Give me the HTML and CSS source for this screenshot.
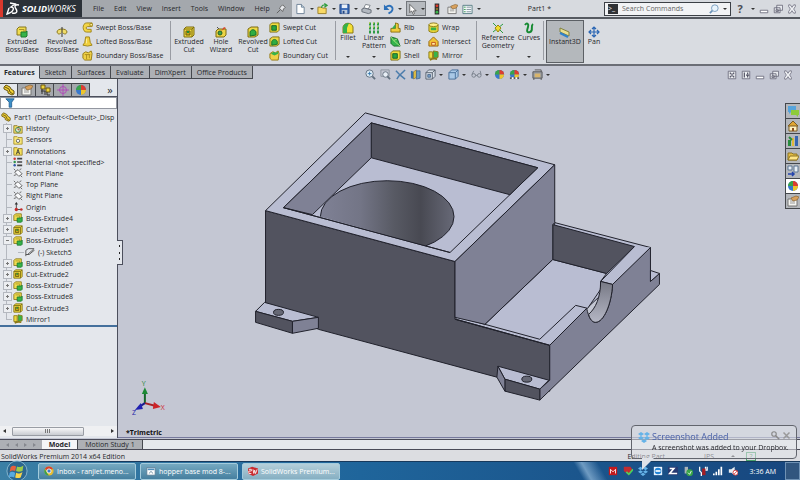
FILE: index.html
```html
<!DOCTYPE html>
<html lang="en">
<head>
    <meta charset="UTF-8">
    <meta name="viewport" content="width=device-width, initial-scale=1.0">
    <title>SolidWorks - Part1</title>
    <link rel="stylesheet" href="styles.css">
</head>
<body>
    <svg class="defs" aria-hidden="true">
        <defs>
            <linearGradient id="bore">
                <stop offset="0" stop-color="#7f8195"/><stop offset=".3" stop-color="#737586"/>
                <stop offset=".55" stop-color="#585a64"/><stop offset=".75" stop-color="#484952"/><stop offset="1" stop-color="#676977"/>
            </linearGradient>
            <linearGradient id="notch" x1="0" y1="0" x2="0" y2="1">
                <stop offset="0" stop-color="#777985"/><stop offset="1" stop-color="#b4b6c4"/>
            </linearGradient>
            <clipPath id="floorClip"><path d="M371 158L510 195L450 253L312 215Z"/></clipPath>
        </defs>
        <symbol id="boss" viewBox="0 0 12 12"><path d="M1 3l2-2h7v6l-2 2H1z" fill="#f0dc50" stroke="#86761c"/><path d="M3 3.500h5v5" fill="none" stroke="#a8932a"/><path d="M5 6h5l1-1v5l-1 1H5z" fill="#36b34a" stroke="#1d7a2c"/></symbol>
        <symbol id="cut" viewBox="0 0 12 12"><path d="M1 3l2-2h8v8l-2 2H1z" fill="#efd93f" stroke="#7d6c12"/><path d="M1 3h8v8M9 3l2-2" fill="none" stroke="#7d6c12"/><path d="M3 5h4v4H3z" fill="#c9a71a" stroke="#6e5e10"/><path d="M5 5v2" stroke="#228b35" stroke-width="2"/></symbol>
        <symbol id="revolve" viewBox="0 0 12 12"><path d="M1 6c0-4 10-4 10 0-1 3-3 2-4 1M1 6c1 3 3 2 4 1" fill="#f1dd69" stroke="#8b7820"/><path d="M6 1v10" stroke="#333"/></symbol>
        <symbol id="swept" viewBox="0 0 12 12"><path d="M11 1H5C0 1 0 11 5 11h5V8H6C4 8 4 5 6 5h5z" fill="#f3d547" stroke="#9c8215"/><circle cx="10" cy="3" r="1.500" fill="#fff2a0" stroke="#9c8215"/></symbol>
        <symbol id="loft" viewBox="0 0 12 12"><path d="M4 1h4l1 6 2 3-5 1-5-1 2-3z" fill="#f0cf3d" stroke="#9c8215"/><path d="M5 3v5" stroke="#fff3a5"/></symbol>
        <symbol id="boundary" viewBox="0 0 12 12"><path d="M1 4l3-2 3 1 3-2 1 3-1 7H3L1 9z" fill="#f0d047" stroke="#95790f"/><path d="M3 5h6M5 5v5M8 5v4" stroke="#a88a1e"/></symbol>
        <symbol id="boundaryCut" viewBox="0 0 12 12"><path d="M1 4l3-2 3 1 3-2 1 3-1 7H3L1 9z" fill="#f0d047" stroke="#95790f"/><path d="M2 4l3-2 2 1 3-1v2L6 6z" fill="#36b34a"/></symbol>
        <symbol id="hole" viewBox="0 0 12 12"><path d="M1 5l2-2h8v6l-2 2H1z" fill="#ecd445" stroke="#7f6d12"/><circle cx="5" cy="7" r="2" fill="#3ca54a" stroke="#245f2b"/><path d="M6 5l3-4 2 1z" fill="#d6452c"/><path d="M2 1l2 2" stroke="#555"/></symbol>
        <symbol id="greenCut" viewBox="0 0 12 12"><path d="M1 3l3-2h7v8l-3 2H1z" fill="#eed945" stroke="#7f6d12"/><path d="M3 10V6c1-3 5-3 6 0v3z" fill="#2fae43" stroke="#19702a"/></symbol>
        <symbol id="fillet" viewBox="0 0 12 12"><path d="M1 5c1-5 9-5 10 0v6H1z" fill="#f4df35" stroke="#8a7914"/><path d="M1 6c0-4 4-5 6-5L5 6v5H1z" fill="#35b14a"/></symbol>
        <symbol id="pattern" viewBox="0 0 12 12"><path d="M1 2h2M5 2h2M9 2h2M1 6h2M5 6h2M9 6h2M1 10h2M5 10h2M9 10h2" stroke="#2f9c46" stroke-width="3"/><path d="M1 1h1M5 1h1M9 1h1M1 5h1M5 5h1M9 5h1" stroke="#e9dc48"/></symbol>
        <symbol id="rib" viewBox="0 0 12 12"><path d="M1 7h5V1l3 1v5h2v4H1z" fill="#f0cc3c" stroke="#8a6e0c"/><path d="M2 7l4-5v5z" fill="#37b04c"/></symbol>
        <symbol id="draft" viewBox="0 0 12 12"><path d="M1 1l7 2 3 8H4L1 8z" fill="#35b44c" stroke="#176a27"/><path d="M1 1l3 4 7 6M4 5l4-2" stroke="#a6e27d" fill="none"/></symbol>
        <symbol id="shell" viewBox="0 0 12 12"><path d="M1 3l2-2h8v8l-2 2H1z" fill="#f1de40" stroke="#7f6d12"/><path d="M3 4h5v5H3z" fill="#29a740" stroke="#186026"/></symbol>
        <symbol id="wrap" viewBox="0 0 12 12"><path d="M1 3v7c2 2 8 2 10 0V3z" fill="#f1d837" stroke="#8a7914"/><ellipse cx="6" cy="3" rx="5" ry="2" fill="#fff08a" stroke="#8a7914"/><path d="M3 6h6v3H3z" fill="#35b14a"/></symbol>
        <symbol id="intersect" viewBox="0 0 12 12"><path d="M1 11V6l5-5 5 5v5z" fill="#f2c437" stroke="#94640c"/><path d="M4 10V7h4v3z" fill="#fff2a3" stroke="#be4f1e"/></symbol>
        <symbol id="mirror" viewBox="0 0 12 12"><path d="M1 2h4v7H1z" fill="#f0d93e" stroke="#8a7914"/><path d="M6 1l5 1v6l-5 1z" fill="#36b34a" stroke="#8a7914"/><path d="M2 11c3-2 5-2 8-1" fill="none" stroke="#8a7914" stroke-width="2"/></symbol>
        <symbol id="refgeo" viewBox="0 0 12 12"><path d="M1 1l10 10M1 10l10-8" stroke="#2b9c40"/><path d="M3 6l3-3 3 3-3 4z" fill="#f1dc2d" stroke="#99870f"/></symbol>
        <symbol id="curves" viewBox="0 0 12 12"><path d="M2 3c2-3 4-1 3 2s-2 6 2 5 0-6 3-8" fill="none" stroke="#168a32" stroke-width="2"/></symbol>
        <symbol id="instant" viewBox="0 0 12 12"><path d="M1 2l9 4v4L1 6z" fill="#e9df90" stroke="#7f8141"/><path d="M1 7l8 4" stroke="#2f82ca" stroke-width="2"/></symbol>
        <symbol id="pan" viewBox="0 0 12 12"><path d="M6 1v10M1 6h10M4 3l2-2 2 2M4 9l2 2 2-2M3 4L1 6l2 2M9 4l2 2-2 2" fill="none" stroke="#2a66b4" stroke-width="1.200"/></symbol>
        <symbol id="page" viewBox="0 0 12 12"><path d="M2 1h5l3 3v7H2z" fill="#fff" stroke="#6b8095"/><path d="M7 1v3h3" fill="#cbd9e6" stroke="#6b8095"/></symbol>
        <symbol id="folder" viewBox="0 0 12 12"><path d="M1 10V3h4l1 1h4v6z" fill="#e3bd43" stroke="#8e7424"/><path d="M1 10l2-4h9l-2 4z" fill="#ffe688" stroke="#8e7424"/></symbol>
        <symbol id="open" viewBox="0 0 12 12"><path d="M1 11V4h4l1 1h4v6z" fill="#f8d965" stroke="#9a7f26"/><path d="M5 5c0-3 2-4 5-3M8 0l3 2-3 2" fill="none" stroke="#2d9c3c" stroke-width="1.300"/></symbol>
        <symbol id="save" viewBox="0 0 12 12"><path d="M1 1h10v10H1z" fill="#3768b5" stroke="#244682"/><path d="M3 1h6v4H3z" fill="#e8eff8"/><path d="M3 7h6v4H3z" fill="#bac8da"/><path d="M4 8h2v3H4z" fill="#244682"/></symbol>
        <symbol id="print" viewBox="0 0 12 12"><path d="M3 5l2-4 5 1-2 4z" fill="#fff" stroke="#7a8088"/><path d="M1 6l3-1 7 2v3l-3 1-7-2z" fill="#b3b9c1" stroke="#656c76"/></symbol>
        <symbol id="undo" viewBox="0 0 12 12"><path d="M3 4c5-4 10 1 6 5l-3 2" fill="none" stroke="#2c70b9" stroke-width="2"/><path d="M1 1v6h6z" fill="#2c70b9"/></symbol>
        <symbol id="cursor" viewBox="0 0 12 12"><path d="M3 1v9l2-2 2 4 1-1-1-3h3z" fill="#fff" stroke="#444" stroke-width=".8"/></symbol>
        <symbol id="light" viewBox="0 0 12 12"><path d="M4 0h5v12H4z" fill="#333"/><circle cx="6.500" cy="2.500" r="1.500" fill="#e03a2b"/><circle cx="6.500" cy="6" r="1.300" fill="#8a7430"/><circle cx="6.500" cy="9.500" r="1.500" fill="#38b44a"/></symbol>
        <symbol id="props" viewBox="0 0 12 12"><path d="M1 4h9v7H1z" fill="#f4f4f0" stroke="#777"/><path d="M3 6h5M3 8h5" stroke="#999"/><path d="M4 3l5-2 3 1-2 3-4 1z" fill="#d9a15d" stroke="#8a6534" stroke-width=".7"/></symbol>
        <symbol id="list" viewBox="0 0 12 12"><path d="M1 2h10v9H1z" fill="#f5fafb" stroke="#547b83"/><path d="M5 4h5M5 6.500h5M5 9h5" stroke="#7c8c98"/><path d="M2 4h2M2 6.500h2M2 9h2" stroke="#30974a"/></symbol>
        <symbol id="pin" viewBox="0 0 12 12"><path d="M1 11l4-4M4 5l4 4 1-3 2-2-3-3-2 2z" fill="#e5e7ea" stroke="#555"/></symbol>
        <symbol id="part" viewBox="0 0 12 12"><path d="M1 3l2-2 4 2 1 2 3 2v3l-2 1-4-2V7L1 5z" fill="#f2d236" stroke="#6a5711"/><path d="M2 3l4 2 1 3 3 2" fill="none" stroke="#6a5711"/></symbol>
        <symbol id="config" viewBox="0 0 12 12"><path d="M2 1h4v4H2zM7 4h4v4H7z" fill="#efd43d" stroke="#6a5711"/><path d="M2 7h4v4M3 5v5M8 8v3h3" fill="none" stroke="#333"/></symbol>
        <symbol id="target" viewBox="0 0 12 12"><circle cx="6" cy="6" r="3.500" fill="none" stroke="#b04cba"/><path d="M6 0v12M0 6h12" stroke="#b04cba"/></symbol>
        <symbol id="ball" viewBox="0 0 12 12"><circle cx="6" cy="6" r="5" fill="#3878cd"/><path d="M6 6V1a5 5 0 0 0-5 5z" fill="#3aa348"/><path d="M6 6V1a5 5 0 0 1 5 5z" fill="#de3c2f"/><path d="M6 6h5a5 5 0 0 1-5 5z" fill="#efc52c"/></symbol>
        <symbol id="filter" viewBox="0 0 12 12"><path d="M1 1h10L8 5v6H5V5z" fill="#3c8fc7" stroke="#205e91"/></symbol>
        <symbol id="history" viewBox="0 0 12 12"><path d="M1 2h4l1 1h5v8H1z" fill="#f3df65" stroke="#89772a"/><circle cx="6" cy="7" r="3" fill="#d9f0d5" stroke="#31714b"/><path d="M6 5v2h2" fill="none" stroke="#a03020"/></symbol>
        <symbol id="sensor" viewBox="0 0 12 12"><path d="M1 2h4l1 1h5v8H1z" fill="#f8e77a" stroke="#a48d28"/><circle cx="6" cy="7" r="2" fill="#fff" stroke="#555"/></symbol>
        <symbol id="note" viewBox="0 0 12 12"><path d="M1 2h4l1 1h5v8H1z" fill="#f5e05c" stroke="#96802a"/><path d="M4 10l2-6 2 6M5 8h2" fill="none" stroke="#333"/></symbol>
        <symbol id="material" viewBox="0 0 12 12"><path d="M5 2h6M5 6h6M5 10h6" stroke="#444" stroke-width="2"/><circle cx="2" cy="2" r="1.500" fill="#cf3a33"/><circle cx="2" cy="6" r="1.500" fill="#31934b"/><circle cx="2" cy="10" r="1.500" fill="#3458a8"/></symbol>
        <symbol id="plane" viewBox="0 0 12 12"><path d="M2 5l4-3 5 5-4 3z" fill="#f8f9fb" stroke="#555"/><path d="M1 1l2 2M9 9l2 2M8 2l2-1M1 9l3-1" stroke="#555"/></symbol>
        <symbol id="origin" viewBox="0 0 12 12"><path d="M4 1v8h7" fill="none" stroke="#333"/><path d="M2 3l2-3 2 3z" fill="#333"/><circle cx="4" cy="9" r="2" fill="#c52b2b"/><circle cx="10" cy="9" r="1.500" fill="#c52b2b"/></symbol>
        <symbol id="sketch" viewBox="0 0 12 12"><path d="M1 11V4l3-2h7M3 9l7-6 1 1-6 5H1" fill="none" stroke="#444"/></symbol>
        <symbol id="zoomfit" viewBox="0 0 12 12"><circle cx="5" cy="5" r="4" fill="#dbeaf5" stroke="#62707e"/><path d="M8 8l3 3" stroke="#62707e" stroke-width="2"/><path d="M3 5h4M5 3v4" stroke="#3b78ac"/></symbol>
        <symbol id="zoomarea" viewBox="0 0 12 12"><path d="M1 1h9v7H1z" fill="none" stroke="#8a939d"/><circle cx="6" cy="6" r="3" fill="#e7eef5" stroke="#62707e"/><path d="M8 8l3 3" stroke="#62707e" stroke-width="2"/></symbol>
        <symbol id="prev" viewBox="0 0 12 12"><path d="M1 2l5 5M11 1L4 8l-2 3M6 7l5 4" stroke="#4b7cab" stroke-width="1.600" fill="none"/></symbol>
        <symbol id="section" viewBox="0 0 12 12"><path d="M1 2l3 1v8l-3-1z" fill="#3971ae"/><path d="M4 3l3-2v8l-3 2z" fill="#e6c445" stroke="#7a6625" stroke-width=".6"/><path d="M7 2h4v8l-4 1z" fill="#6999c4" stroke="#335983" stroke-width=".7"/></symbol>
        <symbol id="cube" viewBox="0 0 12 12"><path d="M1 4l3-3h7v7l-3 3H1z" fill="#a9c8e6" stroke="#476f99"/><path d="M1 4h7v7M8 4l3-3" fill="none" stroke="#476f99"/></symbol>
        <symbol id="views" viewBox="0 0 12 12"><path d="M1 4l3-3h7v7l-3 3H1z" fill="#d8dfe8" stroke="#555f6c"/><path d="M1 4h7v7M8 4l3-3" fill="none" stroke="#555f6c"/><path d="M3 6h3v3H3z" fill="#749bc6" stroke="#55718f"/></symbol>
        <symbol id="glasses" viewBox="0 0 12 12"><circle cx="3" cy="7" r="2" fill="none" stroke="#777f8a"/><circle cx="9" cy="7" r="2" fill="none" stroke="#777f8a"/><path d="M5 7h2M1 6l2-4M11 6l-1-4" fill="none" stroke="#777f8a"/></symbol>
        <symbol id="scene" viewBox="0 0 12 12"><use href="#ball"/><path d="M1 9h10v2H1z" fill="#555"/><path d="M3 9h2v2H3zM7 9h2v2H7z" fill="#fff"/></symbol>
        <symbol id="camera" viewBox="0 0 12 12"><path d="M1 3h10v7H1z" fill="#9a9ea4" stroke="#555"/><path d="M3 5h6v4H3z" fill="#d8b46b"/><path d="M3 1h7v2M2 10v2M10 10v2" stroke="#555" fill="none"/></symbol>
        <symbol id="min" viewBox="0 0 12 12"><path d="M1.500 7.500h9v3h-9z" fill="#fff" stroke="#667"/></symbol>
        <symbol id="restore" viewBox="0 0 12 12"><path d="M4.500 1.500h7v6h-7zM1.500 4.500h7v6h-7z" fill="#e8eaee" stroke="#667"/><path d="M3.500 7h3v2h-3z" fill="none" stroke="#667"/></symbol>
        <symbol id="close" viewBox="0 0 12 12"><path d="M2 1h2l2 3 2-3h2v2L8 6l2 3v2H8L6 8l-2 3H2V9l2-3-2-3z" fill="#eef0f3" stroke="#667" stroke-width=".9"/></symbol>
        <symbol id="paneL" viewBox="0 0 12 12"><path d="M1.500 1.500h9v9h-9z" fill="#eef0f3" stroke="#667"/><path d="M4 3v2M4 7v2M6 4v4M8 3v2M8 7v2" stroke="#556" stroke-width="1.500"/></symbol>
        <symbol id="paneR" viewBox="0 0 12 12"><path d="M1.500 1.500h9v9h-9z" fill="#eef0f3" stroke="#667"/><path d="M4 3v6M6 6h4M8 3v2M8 7v2" stroke="#556" stroke-width="1.500"/></symbol>
        <symbol id="mag" viewBox="0 0 12 12"><circle cx="7" cy="5" r="4" fill="#e9f4fc" stroke="#6b93b8"/><path d="M4 8l-3 3" stroke="#6b93b8" stroke-width="2"/></symbol>
        <symbol id="chat" viewBox="0 0 12 12"><path d="M1 1h8v6H4L2 9V7H1z" fill="#56a4dc"/><path d="M4 5h8v5h-1v2L9 10H4z" fill="#8ecb3b"/></symbol>
        <symbol id="home" viewBox="0 0 12 12"><path d="M2 6v5h8V6" fill="#fff1bf" stroke="#7c5c22"/><path d="M1 6l5-5 5 5z" fill="#e0a634" stroke="#7c5c22"/><path d="M5 8h2v3H5z" fill="#8b4f20"/></symbol>
        <symbol id="books" viewBox="0 0 12 12"><path d="M1 5h3v6H1z" fill="#288b3d"/><path d="M5 3h2v8H5z" fill="#e0b83a"/><path d="M8 1h3v10H8z" fill="#3665af"/><path d="M2 2l3 3" stroke="#288b3d" stroke-width="2"/></symbol>
        <symbol id="palette" viewBox="0 0 12 12"><path d="M1 1h4v4H1zM7 1h4v6H7z" fill="#e8eff6" stroke="#5d7695"/><path d="M1 9h6M5 7l2 2-2 2" fill="none" stroke="#2444ad" stroke-width="1.500"/></symbol>
        <symbol id="dropbox" viewBox="0 0 12 12"><path d="M3 1l3 2-3 2-3-2zM9 1l3 2-3 2-3-2zM3 5l3 2-3 2-3-2zM9 5l3 2-3 2-3-2zM6 8l3 2-3 2-3-2z" fill="#65b3e8"/></symbol>
        <symbol id="chrome" viewBox="0 0 12 12"><circle cx="6" cy="6" r="5.500" fill="#e6bd31"/><path d="M6 6L1 3.500A5.500 5.500 0 0 1 11 4H6z" fill="#d9422f"/><path d="M1 3.500L4 9l2 2.500A5.500 5.500 0 0 1 1 3.500z" fill="#38a14a"/><circle cx="6" cy="6" r="2.500" fill="#3d79cf" stroke="#fff"/></symbol>
        <symbol id="doc" viewBox="0 0 12 12"><path d="M1 2h10v9H1z" fill="#fff" stroke="#577b94"/><path d="M2 4h8" stroke="#4f8eba" stroke-width="2"/><path d="M4 9c1-3 3-3 4 0" stroke="#577b94" fill="none"/></symbol>
        <symbol id="sw" viewBox="0 0 12 12"><path d="M0 3l5-2 7 2v6l-6 3-6-3z" fill="#c92c30"/><path d="M1 4h3v2H1v3h3M6 4l1 5 1-4 1 4 2-5" fill="none" stroke="#fff"/></symbol>
    </svg>

    <header class="titlebar">
        <div class="brand">
            <svg class="ds" viewBox="0 0 14 14"><path d="M4 1l5 1-4 3c4 0 3 5-4 7l2-6M13 3c-4-1-5 1-3 4s0 5-4 4" fill="none" stroke="#fff" stroke-width="1.400"/></svg>
            <span><b>SOLID</b>WORKS</span>
        </div>
        <nav class="menus">
            <button>File</button><button>Edit</button><button>View</button><button>Insert</button><button>Tools</button><button>Window</button><button>Help</button>
            <button class="pin" aria-label="Pin"><svg class="i10"><use href="#pin"/></svg></button>
        </nav>
        <div class="quick">
            <button class="drop" aria-label="New"><svg><use href="#page"/></svg></button>
            <button class="drop" aria-label="Open"><svg><use href="#open"/></svg></button>
            <button class="drop" aria-label="Save"><svg><use href="#save"/></svg></button>
            <button class="drop" aria-label="Print"><svg><use href="#print"/></svg></button>
            <button class="drop" aria-label="Undo"><svg><use href="#undo"/></svg></button>
            <button class="drop picked" aria-label="Select"><svg><use href="#cursor"/></svg></button>
            <button aria-label="Rebuild"><svg><use href="#light"/></svg></button>
            <button aria-label="Properties"><svg><use href="#props"/></svg></button>
            <button class="drop" aria-label="Options"><svg><use href="#list"/></svg></button>
        </div>
        <span class="doc-title">Part1 *</span>
        <label class="search">
            <span class="prompt">&gt;_</span>
            <input type="text" placeholder="Search Commands" aria-label="Search Commands">
            <svg class="i10"><use href="#mag"/></svg><i class="caret"></i>
        </label>
        <div class="window-buttons">
            <button class="help" aria-label="Help">?</button><i class="caret"></i>
            <button aria-label="Minimize"><svg><use href="#min"/></svg></button>
            <button aria-label="Restore"><svg><use href="#restore"/></svg></button>
            <button aria-label="Close"><svg><use href="#close"/></svg></button>
        </div>
    </header>

    <section class="ribbon">
        <button class="big w40"><svg><use href="#boss"/></svg>Extruded<br>Boss/Base</button>
        <button class="big w40"><svg><use href="#revolve"/></svg>Revolved<br>Boss/Base</button>
        <div class="stack w86">
            <button><svg><use href="#swept"/></svg>Swept Boss/Base</button>
            <button><svg><use href="#loft"/></svg>Lofted Boss/Base</button>
            <button><svg><use href="#boundary"/></svg>Boundary Boss/Base</button>
        </div>
        <i class="rule"></i>
        <button class="big w32"><svg><use href="#cut"/></svg>Extruded<br>Cut</button>
        <button class="big w32"><svg><use href="#hole"/></svg>Hole<br>Wizard</button>
        <button class="big w32"><svg><use href="#greenCut"/></svg>Revolved<br>Cut</button>
        <div class="stack w64">
            <button><svg><use href="#shell"/></svg>Swept Cut</button>
            <button><svg><use href="#greenCut"/></svg>Lofted Cut</button>
            <button><svg><use href="#boundaryCut"/></svg>Boundary Cut</button>
        </div>
        <i class="rule"></i>
        <button class="big more w20"><svg><use href="#fillet"/></svg>Fillet</button>
        <button class="big more w32"><svg><use href="#pattern"/></svg>Linear<br>Pattern</button>
        <div class="stack w38">
            <button><svg><use href="#rib"/></svg>Rib</button>
            <button><svg><use href="#draft"/></svg>Draft</button>
            <button><svg><use href="#shell"/></svg>Shell</button>
        </div>
        <div class="stack w46">
            <button><svg><use href="#wrap"/></svg>Wrap</button>
            <button><svg><use href="#intersect"/></svg>Intersect</button>
            <button><svg><use href="#mirror"/></svg>Mirror</button>
        </div>
        <i class="rule"></i>
        <button class="big more w38"><svg><use href="#refgeo"/></svg>Reference<br>Geometry</button>
        <button class="big more w24"><svg><use href="#curves"/></svg>Curves</button>
        <i class="rule"></i>
        <button class="big on w38"><svg><use href="#instant"/></svg>Instant3D</button>
        <button class="big w20"><svg><use href="#pan"/></svg>Pan</button>
    </section>

    <div class="work">
        <nav class="tabs">
            <button class="active">Features</button><button>Sketch</button><button>Surfaces</button><button>Evaluate</button><button>DimXpert</button><button>Office Products</button>
        </nav>
        <div class="hud">
            <button aria-label="Zoom to fit"><svg><use href="#zoomfit"/></svg></button>
            <button aria-label="Zoom to area"><svg><use href="#zoomarea"/></svg></button>
            <button aria-label="Previous view"><svg><use href="#prev"/></svg></button>
            <button aria-label="Section view"><svg><use href="#section"/></svg></button>
            <button class="drop" aria-label="View orientation"><svg><use href="#views"/></svg></button>
            <button class="drop" aria-label="Display style"><svg><use href="#cube"/></svg></button>
            <button class="drop" aria-label="Hide items"><svg><use href="#glasses"/></svg></button>
            <button aria-label="Appearance"><svg><use href="#ball"/></svg></button>
            <button class="drop" aria-label="Scene"><svg><use href="#scene"/></svg></button>
            <button class="drop" aria-label="View settings"><svg><use href="#camera"/></svg></button>
        </div>
        <div class="view-buttons">
            <button aria-label="Left pane"><svg><use href="#paneL"/></svg></button>
            <button aria-label="Right pane"><svg><use href="#paneR"/></svg></button>
            <button aria-label="Minimize view"><svg><use href="#min"/></svg></button>
            <button aria-label="Restore view"><svg><use href="#restore"/></svg></button>
            <button aria-label="Close view"><svg><use href="#close"/></svg></button>
        </div>

        <div class="main">
            <aside class="side">
                <div class="side-tabs">
                    <button class="active" aria-label="Feature tree"><svg><use href="#part"/></svg></button>
                    <button aria-label="Property manager"><svg><use href="#props"/></svg></button>
                    <button aria-label="Configurations"><svg><use href="#config"/></svg></button>
                    <button aria-label="DimXpert manager"><svg><use href="#target"/></svg></button>
                    <button aria-label="Display manager"><svg><use href="#ball"/></svg></button>
                    <button class="expand" aria-label="More tabs">»</button>
                </div>
                <label class="filter"><svg class="i10"><use href="#filter"/></svg><input type="text" aria-label="Filter tree"></label>
                <div class="root"><svg class="i10"><use href="#part"/></svg>Part1&nbsp; (Default&lt;&lt;Default&gt;_Disp</div>
                <ul class="tree">
                    <li class="plus"><svg><use href="#history"/></svg>History</li>
                    <li><svg><use href="#sensor"/></svg>Sensors</li>
                    <li class="plus"><svg><use href="#note"/></svg>Annotations</li>
                    <li><svg><use href="#material"/></svg>Material &lt;not specified&gt;</li>
                    <li><svg><use href="#plane"/></svg>Front Plane</li>
                    <li><svg><use href="#plane"/></svg>Top Plane</li>
                    <li><svg><use href="#plane"/></svg>Right Plane</li>
                    <li><svg><use href="#origin"/></svg>Origin</li>
                    <li class="plus"><svg><use href="#boss"/></svg>Boss-Extrude4</li>
                    <li class="plus"><svg><use href="#cut"/></svg>Cut-Extrude1</li>
                    <li class="plus minus"><svg><use href="#boss"/></svg>Boss-Extrude5</li>
                    <li class="child"><svg><use href="#sketch"/></svg>(-) Sketch5</li>
                    <li class="plus"><svg><use href="#boss"/></svg>Boss-Extrude6</li>
                    <li class="plus"><svg><use href="#cut"/></svg>Cut-Extrude2</li>
                    <li class="plus"><svg><use href="#boss"/></svg>Boss-Extrude7</li>
                    <li class="plus"><svg><use href="#boss"/></svg>Boss-Extrude8</li>
                    <li class="plus"><svg><use href="#cut"/></svg>Cut-Extrude3</li>
                    <li><svg><use href="#mirror"/></svg>Mirror1</li>
                </ul>
                <div class="scroll"><i class="arrow left"></i><i class="thumb"></i><i class="arrow right"></i></div>
                <div class="grip"><i></i><i></i><i></i></div>
            </aside>

            <main class="viewport">
                <svg class="model" viewBox="118 79 682 359" role="img" aria-label="Part1 model">
                    <g stroke="#20212b" stroke-width="1" stroke-linejoin="round">
                        <!-- front face -->
                        <path class="dark" d="M265 211L455 262V320L550 346V392L497 378L318 330L265 304Z"/>
                        <!-- upper box -->
                        <path class="top" d="M365 113L555 165L455 262L265 211Z"/>
                        <path class="top" d="M371 123L538 168L450 253L283 208Z"/>
                        <path class="dark" d="M371 123L538 168L510 195L371 158Z"/>
                        <path class="side-face" d="M371 123V158L312 215L283 208Z"/>
                        <ellipse cx="387" cy="217" rx="67" ry="36" fill="url(#bore)" clip-path="url(#floorClip)"/>
                        <path d="M283 208L450 253" fill="none"/>
                        <!-- lower tray -->
                        <path class="top" d="M555 223L651 248L613 285L587 309L550 346L456 320V317L485 325L553 260Z"/>
                        <path class="top" d="M553 260L607 274L601 282V290L588 309L576 306L540 340L485 325Z"/>
                        <path class="dark" d="M553 225L635 247L607 274L553 260Z"/>
                        <path class="side-face" d="M455 262L555 165V223L553 225V260L485 325L455 318Z"/>
                        <path d="M456 320L550 346" fill="none"/>
                        <path class="top" d="M601 282L635 247L651 248L613 285Z" stroke="none"/>
                        <path d="M635 247L601 282L613 285" fill="none"/>
                        <path class="side-face" d="M550 346L587 309C589 318 592 323 596 323C604 323 612 305 613 285L651 248V282L660 274V285L540 401V390L550 381Z"/>
                        <path class="top" d="M651 271L660 274L651 282Z"/>
                        <path d="M601 282L613 285C612 305 604 323 596 323C593 323 590 320 589 315C596 309 601 298 601 282Z" fill="url(#notch)"/>
                        <!-- mounting feet -->
                        <path class="top" d="M264 303L318 318L292 322L255 312Z"/>
                        <path class="dark" d="M255 312L292 322V334L255 323Z"/>
                        <path class="side-face" d="M292 322L318 318V329L292 334Z"/>
                        <ellipse cx="278" cy="313" rx="5" ry="3" fill="#666875"/>
                        <path class="top" d="M498 367L549 381L540 390L505 380Z"/>
                        <path class="dark" d="M505 380L540 390V401L505 392Z"/>
                        <path class="side-face" d="M498 367L505 380V392L497 378Z"/>
                        <ellipse cx="527" cy="380" rx="5" ry="3" fill="#666875"/>
                    </g>
                    <!-- orientation triad -->
                    <g stroke-width="2">
                        <path d="M144 404V393" stroke="#16662a"/><path d="M141 395L144 388L147 395Z" fill="#1b8a34"/>
                        <path d="M144 404L155 407" stroke="#a82226"/><path d="M153 403L160 408L152 410Z" fill="#cc2428"/>
                        <path d="M144 404L138 408" stroke="#1c1c8c"/><path d="M140 404L134 411L142 410Z" fill="#2020b0"/>
                    </g>
                    <text class="axis y" x="141" y="387">Y</text><text class="axis x" x="160" y="411">X</text><text class="axis z" x="131" y="416">Z</text>
                    <text class="trimetric" x="125" y="436">*Trimetric</text>
                </svg>
                <div class="task-pane">
                    <button aria-label="Forum"><svg><use href="#chat"/></svg></button>
                    <button aria-label="Resources"><svg><use href="#home"/></svg></button>
                    <button aria-label="Design library"><svg><use href="#books"/></svg></button>
                    <button aria-label="File explorer"><svg><use href="#folder"/></svg></button>
                    <button aria-label="View palette"><svg><use href="#palette"/></svg></button>
                    <button class="active" aria-label="Appearances"><svg><use href="#ball"/></svg></button>
                    <button aria-label="Custom properties"><svg><use href="#props"/></svg></button>
                </div>
            </main>
        </div>
    </div>

    <nav class="doc-tabs">
        <span class="steps"><i></i><i></i><i></i><i></i></span>
        <button class="active">Model</button><button>Motion Study 1</button>
    </nav>
    <footer class="status">
        <span>SolidWorks Premium 2014 x64 Edition</span>
        <span class="mode">Editing Part</span><span class="units">IPS</span><i class="up"></i><span class="hint">?</span>
    </footer>

    <div class="taskbar">
        <button class="start" aria-label="Start">
            <svg viewBox="0 0 24 24"><circle cx="12" cy="12" r="11" fill="#2c6790" stroke="#8bb8cf"/><path d="M5 8c2-2 4-2 6-1l-1 5c-2-1-4-1-6 1z" fill="#e8603c"/><path d="M12 7c2 1 4 1 7-1l-1 6c-3 1-5 1-7 0z" fill="#9ccb49"/><path d="M4 14c2-2 4-1 6 0l-1 5c-2-1-4-1-6 0z" fill="#56a9e0"/><path d="M11 14c2 1 4 1 7-1l-2 6c-2 1-4 1-6 0z" fill="#f8d34a"/></svg>
        </button>
        <button class="task"><svg><use href="#chrome"/></svg>Inbox - ranjiet.meno...</button>
        <button class="task"><svg><use href="#doc"/></svg>hopper base mod 8-...</button>
        <button class="task current"><svg><use href="#sw"/></svg>SolidWorks Premium...</button>
        <div class="tray">
            <svg viewBox="0 0 12 12"><path d="M1 1h10v10H1z" fill="#c3191d"/><path d="M3 9V4l3 3 3-3v5" fill="none" stroke="#fff"/></svg>
            <svg viewBox="0 0 12 12"><path d="M1 1h8l2 3-4 7-6-5z" fill="#c22c31"/><path d="M4 7l3 3 5-6" fill="none" stroke="#4ed05a" stroke-width="2"/></svg>
            <svg><use href="#dropbox"/></svg>
            <svg viewBox="0 0 12 12"><path d="M1 1h10v10H1z" fill="#e9f4ff"/><circle cx="6" cy="6" r="4" fill="#2384d6"/><path d="M3 6h6" stroke="#fff" stroke-width="2"/></svg>
            <svg viewBox="0 0 12 12"><path d="M0 1h12v10H0z" fill="#273a72"/><path d="M2 3h5L2 9h9" fill="none" stroke="#fff" stroke-width="2"/></svg>
            <svg viewBox="0 0 12 12"><path d="M2 1h4v8H2z" fill="#aab2b7"/><circle cx="8" cy="8" r="4" fill="#37a447"/><path d="M6 8l2 2 2-4" fill="none" stroke="#fff"/></svg>
            <svg viewBox="0 0 12 12"><path d="M2 1v5l2 2v4M9 1v4h2V1" fill="none" stroke="#fff" stroke-width="1.500"/><path d="M5 3h4v8H5z" fill="#a41d24"/></svg>
            <svg viewBox="0 0 12 12"><path d="M1 11V9M4 11V7M7 11V4M10 11V1" stroke="#fff" stroke-width="2"/></svg>
            <svg viewBox="0 0 12 12"><path d="M1 4h3l4-3v10L4 8H1z" fill="#e8edf2"/><circle cx="9" cy="8" r="3" fill="#fff" stroke="#d32d2d"/><path d="M7 10l4-4" stroke="#d32d2d"/></svg>
        </div>
        <time class="clock">3:36 AM</time>
        <button class="desktop" aria-label="Show desktop"></button>
    </div>

    <div class="toast" role="status">
        <svg class="logo"><use href="#dropbox"/></svg>
        <div>
            <h2>Screenshot Added</h2>
            <p>A screenshot was added to your Dropbox.</p>
        </div>
        <button aria-label="Notification options"><svg viewBox="0 0 12 12"><circle cx="4" cy="4" r="3" fill="none" stroke="#888" stroke-width="1.500"/><path d="M6 6l5 5" stroke="#888" stroke-width="2"/></svg></button>
        <button aria-label="Dismiss"><svg viewBox="0 0 12 12"><path d="M2 2l8 8M10 2l-8 8" stroke="#999" stroke-width="2"/></svg></button>
        <svg class="tail" viewBox="0 0 12 12"><path d="M0 0v12L12 0z" fill="#dfe2e8"/></svg>
    </div>
</body>
</html>
```
FILE: styles.css
```css
* {
    box-sizing: border-box;
}

body {
    margin: 0;
    height: 100vh;
    display: flex;
    flex-direction: column;
    overflow: hidden;
    background: #c4c7d3;
    color: #26272b;
    font: 7px/9px "Open Sans", "Noto Sans", sans-serif;
}

button,
input {
    margin: 0;
    padding: 0;
    border: 0;
    background: none;
    color: inherit;
    font: inherit;
    white-space: nowrap;
}

input {
    min-width: 0;
    flex: 1;
    outline: 0;
}

button {
    display: flex;
    align-items: center;
    justify-content: center;
}

svg {
    width: 12px;
    height: 12px;
    flex: none;
    display: block;
}

.i10 {
    width: 10px;
    height: 10px;
}

.defs {
    position: absolute;
    width: 0;
    height: 0;
}

.caret,
.drop::after,
.more::after {
    content: "";
    border: solid transparent;
    border-width: 2px 2px 0;
    border-top-color: #333;
}

/* title bar */
.titlebar {
    flex: none;
    height: 19px;
    display: flex;
    align-items: center;
    background: #d7dadf;
    border-bottom: 2px solid #555960;
}

.brand {
    width: 82px;
    height: 17px;
    display: flex;
    align-items: center;
    gap: 2px;
    padding-left: 3px;
    border-left: 3px solid #d9382c;
    background: #2b3138;
    color: #fff;
    font-size: 9px;
    font-style: italic;
}

.brand .ds {
    width: 14px;
    height: 14px;
}

.menus {
    width: 210px;
    height: 17px;
    display: flex;
    align-items: center;
    gap: 10px;
    padding-left: 11px;
    background: #a4a8ad;
}

.menus .pin {
    margin-left: -4px;
}

.quick {
    display: flex;
    align-items: center;
    gap: 5px;
    padding-left: 4px;
}

.quick .drop {
    gap: 4px;
}

.quick svg {
    width: 11px;
    height: 12px;
}

.quick .drop {
    width: 17px;
}

.quick .picked {
    width: 20px;
    height: 15px;
    gap: 3px;
    border: 1px solid #73777c;
    background: #b6babf;
}

.doc-title {
    margin-left: auto;
    margin-right: 53px;
}

.search {
    width: 127px;
    height: 14px;
    display: flex;
    align-items: center;
    gap: 4px;
    padding: 0 3px;
    border: 1px solid #3c4046;
    background: #f2f3f5;
}

.search input::placeholder {
    color: #666;
    opacity: 1;
}

.prompt {
    width: 10px;
    height: 10px;
    background: #303236;
    color: #fff;
}

.window-buttons,
.view-buttons {
    display: flex;
    align-items: center;
    gap: 4px;
}

.window-buttons {
    padding: 0 3px 0 5px;
}

.window-buttons svg,
.view-buttons svg {
    width: 10px;
    height: 10px;
}

.help {
    width: 8px;
    margin-right: 3px;
    color: #4a4d54;
    font-size: 11px;
    font-weight: bold;
}

/* command ribbon */
.ribbon {
    flex: none;
    height: 47px;
    display: flex;
    padding: 1px 2px;
    background: #d9dce1;
    border-bottom: 2px solid #6b6e76;
}

.big {
    flex-direction: column;
    justify-content: flex-start;
    padding-top: 6px;
    line-height: 8px;
    text-align: center;
}

.more {
    position: relative;
    padding-top: 2px;
}

.more::after {
    position: absolute;
    bottom: 5px;
}

.stack {
    display: grid;
    grid-template-rows: repeat(3, 1fr);
}

.stack button {
    justify-content: flex-start;
    gap: 3px;
}

.stack svg {
    width: 11px;
    height: 11px;
}

.rule {
    width: 1px;
    margin: 1px 2px 3px;
    background: #999ca3;
}

.on {
    padding-top: 5px;
    border: 1px solid #5c6065;
    background: #b4b8bc;
}

.w20 { width: 20px; }
.w24 { width: 24px; }
.w32 { width: 32px; }
.w38 { width: 38px; }
.w40 { width: 40px; }
.w46 { width: 46px; }
.w64 { width: 64px; }
.w86 { width: 86px; }

/* work area */
.work {
    position: relative;
    flex: 1;
    min-height: 0;
    display: flex;
    flex-direction: column;
}

.tabs {
    flex: none;
    height: 13px;
    display: flex;
}

.tabs button {
    padding: 0 4px;
    border: solid #45484e;
    border-width: 0 1px 1px 0;
    background: #adb0b5;
}

.tabs button + button {
    padding: 0 5px;
}

.tabs .active {
    border-bottom-color: #e4e7eb;
    background: #e4e7eb;
    font-weight: bold;
}

.hud {
    position: absolute;
    top: 3px;
    left: 365px;
    display: flex;
    gap: 4px;
}

.hud .drop {
    gap: 3px;
    padding-right: 1px;
}

.hud svg {
    width: 11px;
    height: 11px;
}

.view-buttons {
    position: absolute;
    top: 4px;
    right: 7px;
}

.main {
    flex: 1;
    min-height: 0;
    display: flex;
}

/* feature tree */
.side {
    position: relative;
    width: 118px;
    display: flex;
    flex-direction: column;
    padding-top: 4px;
    border-right: 1px solid #4c4f5c;
    background: #e4e7ec;
}

.side-tabs {
    display: flex;
    height: 14px;
    border-bottom: 1px solid #4c4f5c;
}

.side-tabs button {
    width: 18px;
    border: solid #44474c;
    border-width: 1px 1px 0 0;
    background: #a5a8ad;
}

.side-tabs .active {
    background: #e4e7ec;
}

.side-tabs .expand {
    width: 14px;
    margin-left: auto;
    border: 0;
    background: none;
    font-size: 11px;
}

.filter {
    height: 12px;
    display: flex;
    align-items: center;
    padding-left: 4px;
    border: 1px solid #9397a0;
    background: #fff;
}

.root {
    height: 12px;
    margin-top: 2px;
    display: flex;
    align-items: center;
    gap: 3px;
    padding-left: 1px;
    overflow: hidden;
    white-space: nowrap;
}

.tree {
    height: 204px;
    margin: 0;
    padding: 0;
    display: grid;
    grid-auto-rows: 1fr;
    border-bottom: 2px solid #44709c;
    list-style: none;
}

.tree li {
    position: relative;
    display: flex;
    align-items: center;
    gap: 3px;
    padding-left: 13px;
    white-space: nowrap;
    background:
        linear-gradient(#b4b8bf, #b4b8bf) 6px 0 / 1px 100% no-repeat,
        linear-gradient(#b4b8bf, #b4b8bf) 6px 50% / 6px 1px no-repeat;
}

.tree li:last-child {
    background-size: 1px 50%, 6px 1px;
}

.tree svg {
    width: 10px;
    height: 10px;
}

.tree .child {
    padding-left: 25px;
    background-position: 6px 0, 18px 50%;
}

/* expander box */
.plus::before {
    content: "";
    position: absolute;
    left: 3px;
    width: 7px;
    height: 7px;
    border: 1px solid #b4b8bf;
    background:
        linear-gradient(#777, #777) center / 3px 1px no-repeat,
        linear-gradient(#777, #777) center / 1px 3px no-repeat,
        #eceef1;
}

.minus::before {
    background: linear-gradient(#777, #777) center / 3px 1px no-repeat, #eceef1;
}

.scroll {
    height: 10px;
    margin-top: auto;
    margin-bottom: 2px;
    display: flex;
    align-items: center;
    padding: 0 3px;
    background: #eff0f2;
}

.thumb {
    width: 72px;
    height: 9px;
    margin-left: 6px;
    border: 1px solid #999da4;
    border-radius: 1px;
    background:
        repeating-linear-gradient(90deg, #777 0 1px, transparent 1px 2px) center / 6px 4px no-repeat,
        linear-gradient(#f8f8f9, #c9ccd1);
}

.arrow {
    border: solid transparent;
    border-width: 2px 3px 2px 0;
    border-right-color: #333;
}

.arrow.right {
    margin-left: auto;
    transform: rotate(180deg);
}

.grip {
    position: absolute;
    left: 117px;
    top: 161px;
    width: 6px;
    height: 25px;
    display: flex;
    flex-direction: column;
    align-items: center;
    justify-content: space-evenly;
    border: 1px solid #4c4f5c;
    border-left: 0;
    background: #e4e7ec;
}

.grip i {
    width: 1px;
    height: 2px;
    background: #222;
}

/* graphics area */
.viewport {
    position: relative;
    flex: 1;
    min-width: 0;
    border-bottom: 1px solid #777a9d;
}

.model {
    width: 100%;
    height: 100%;
}

.top { fill: #b9bdd2; }
.side-face { fill: #7f8195; }
.dark { fill: #52535f; }

.axis { font-size: 7px; }
.axis.x { fill: #d02c30; }
.axis.y { fill: #23863a; }
.axis.z { fill: #2424a8; }

.trimetric {
    fill: #111;
    font-size: 7px;
    font-weight: bold;
}

.task-pane {
    position: absolute;
    top: 24px;
    right: 0;
    width: 15px;
    display: grid;
    grid-auto-rows: 15px;
    border-left: 1px solid #44474c;
    border-top: 1px solid #44474c;
}

.task-pane button {
    border-bottom: 1px solid #44474c;
    background: #b4b7bc;
}

.task-pane .active {
    background: #fff;
}

/* bottom bars */
.doc-tabs {
    flex: none;
    height: 11px;
    margin-top: 1px;
    display: flex;
    border: solid #4a4b58;
    border-width: 1px 0;
    background: #e5e8ec;
}

.steps {
    width: 42px;
    display: flex;
    align-items: center;
    justify-content: space-evenly;
    background: #adb0b5;
}

.steps i {
    border: solid transparent;
    border-width: 2px 3px 2px 0;
    border-right-color: #85888e;
}

.steps i:nth-child(n + 3) {
    transform: rotate(180deg);
}

.doc-tabs button {
    width: 65px;
    border-right: 1px solid #45484e;
    background: #adb0b5;
}

.doc-tabs .active {
    width: 36px;
    background: #f4f5f7;
    font-weight: bold;
}

.status {
    flex: none;
    height: 11px;
    display: flex;
    align-items: center;
    padding: 1px 45px 0 1px;
    background: #dcdde1;
    line-height: 7px;
}

.mode {
    margin-left: auto;
}

.units {
    margin-left: 39px;
}

.up {
    margin: 0 12px 0 17px;
    border: solid transparent;
    border-width: 0 2px 2px;
    border-bottom-color: #333;
}

.hint {
    width: 8px;
    outline: 1px solid #49a06c;
    color: #2c8851;
    text-align: center;
}

.taskbar {
    flex: none;
    height: 19px;
    display: flex;
    align-items: center;
    gap: 4px;
    border-top: 1px solid #17395c;
    background:
        linear-gradient(60deg, transparent 72%, #6f9bc2 73%, transparent 75%),
        linear-gradient(90deg, #3b7fa5, #1f659b 45%, #17467e);
    color: #fff;
}

.start {
    width: 34px;
}

.start svg {
    width: 22px;
    height: 22px;
}

.task {
    width: 98px;
    height: 17px;
    justify-content: flex-start;
    gap: 3px;
    padding-left: 5px;
    border: 1px solid #a3cbdc;
    border-radius: 2px;
    background: linear-gradient(#75a9c1, #467f9f);
}

.task.current {
    background: linear-gradient(#b4cfda, #86afc2);
}

.task svg {
    width: 10px;
    height: 10px;
}

.tray {
    margin-left: auto;
    display: flex;
    gap: 5px;
}

.tray svg {
    width: 10px;
    height: 10px;
}

.clock {
    margin: 0 5px 0 8px;
}

.desktop {
    width: 15px;
    height: 18px;
    border: 1px solid #6f92b5;
    background: #31567f;
}

/* tray notification */
.toast {
    position: fixed;
    right: 3px;
    bottom: 21px;
    width: 166px;
    height: 34px;
    display: flex;
    align-items: flex-start;
    gap: 2px;
    padding: 5px 5px 0 6px;
    border: 1px solid #62656d;
    border-radius: 4px;
    background: rgba(226, 228, 234, .55);
}

.toast > div {
    flex: 1;
    min-width: 0;
}

.toast h2 {
    margin: 0;
    color: #4a62a8;
    font-size: 9px;
    font-weight: normal;
    line-height: 12px;
}

.toast p {
    margin: 1px 0 0;
    line-height: 7px;
    white-space: nowrap;
}

.toast button svg {
    width: 9px;
    height: 9px;
}

.toast .tail {
    position: absolute;
    left: 10px;
    top: 32px;
}
```
